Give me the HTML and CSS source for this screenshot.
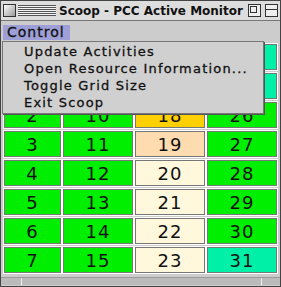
FILE: index.html
```html
<!DOCTYPE html>
<html lang="en">
<head>
  <meta charset="UTF-8" />
  <title>Scoop - PCC Active Monitor</title>
  <link rel="stylesheet" href="styles.css">
</head>
<body>
  <div class="window">
    <div class="titlebar">
      <span class="close-box"></span>
      <span class="stripes left"></span>
      <span class="title">Scoop - PCC Active Monitor</span>
      <span class="stripes right"></span>
      <span class="zoom-box"><span></span></span>
      <span class="collapse-box"></span>
    </div>

    <div class="menubar">
      <span class="menu-title open">Control</span>
    </div>

    <div class="grid-area">
      <div class="grid">
        <div class="cell green hidden">0</div><div class="cell green hidden">8</div><div class="cell green hidden">16</div><div class="cell mint hidden">24</div>
        <div class="cell green hidden">1</div><div class="cell green hidden">9</div><div class="cell green hidden">17</div><div class="cell mint hidden">25</div>
        <div class="cell green">2</div><div class="cell green">10</div><div class="cell orange">18</div><div class="cell green">26</div>
        <div class="cell green">3</div><div class="cell green">11</div><div class="cell peach">19</div><div class="cell green">27</div>
        <div class="cell green">4</div><div class="cell green">12</div><div class="cell cream">20</div><div class="cell green">28</div>
        <div class="cell green">5</div><div class="cell green">13</div><div class="cell cream">21</div><div class="cell green">29</div>
        <div class="cell green">6</div><div class="cell green">14</div><div class="cell cream">22</div><div class="cell green">30</div>
        <div class="cell green">7</div><div class="cell green">15</div><div class="cell cream">23</div><div class="cell mint">31</div>
      </div>
    </div>

    <div class="statusbar">
      <span class="seg first"></span>
      <span class="seg middle"></span>
      <span class="seg last"></span>
    </div>

    <ul class="dropdown">
      <li>Update Activities</li>
      <li>Open Resource Information...</li>
      <li>Toggle Grid Size</li>
      <li>Exit Scoop</li>
    </ul>
  </div>
</body>
</html>
```

FILE: styles.css
```css
body {
  margin: 0;
  width: 281px;
  height: 287px;
  overflow: hidden;
  font-family: "DejaVu Sans", "Liberation Sans", sans-serif;
  background: #cccccc;
}

.window {
  position: relative;
  box-sizing: border-box;
  width: 281px;
  height: 287px;
  border: 1px solid #444;
  background: #cccccc;
  display: flex;
  flex-direction: column;
}

.titlebar {
  height: 19px;
  display: flex;
  align-items: center;
  gap: 2px;
  padding: 0 2px;
  background: #dddddd;
  border-bottom: 1px solid #777;
}

.close-box {
  width: 11px;
  height: 11px;
  border: 1px solid #333;
  background: linear-gradient(135deg, #fff, #999);
}

.stripes {
  height: 11px;
  background: repeating-linear-gradient(to bottom, #555 0, #555 1px, #f4f4f4 1px, #f4f4f4 2px);
}

.stripes.left {
  width: 38px;
}

.stripes.right {
  flex: 1;
}

.title {
  font-size: 12px;
  font-weight: bold;
  color: #111;
  padding: 0 1px;
  white-space: nowrap;
}

.zoom-box {
  position: relative;
  width: 11px;
  height: 11px;
  border: 1px solid #333;
  background: #eee;
}

.zoom-box span {
  position: absolute;
  left: 1px;
  top: 1px;
  width: 5px;
  height: 5px;
  border: 1px solid #333;
}

.collapse-box {
  width: 11px;
  height: 11px;
  border: 1px solid #333;
  background: linear-gradient(to bottom, #eee 0, #eee 4px, #333 4px, #333 5px, #eee 5px);
  margin-left: 2px;
}

.menubar {
  height: 19px;
  display: flex;
  align-items: flex-end;
  padding-left: 2px;
}

.menu-title {
  font-size: 14px;
  letter-spacing: 1px;
  color: #111;
  padding: 0 5px 0 4px;
  line-height: 15px;
  -webkit-text-stroke: 0.3px #111;
}

.menu-title.open {
  background: #9f9fd8;
}

.grid-area {
  flex: 1;
  padding: 4px 0 0 3px;
}

.grid {
  display: grid;
  grid-template-columns: 57px 70px 70px 70px;
  grid-auto-rows: 26px;
  gap: 3px 2px;
}

.cell {
  border: 1px solid #777;
  box-shadow: 0 0 0 1px #fff;
  font-size: 18px;
  color: #111;
  display: flex;
  align-items: center;
  justify-content: center;
  letter-spacing: 1px;
}

.cell.hidden {
  color: transparent;
}

.green { background: #00ee00; }
.mint { background: #00f0a8; }
.orange { background: #ffd000; }
.peach { background: #ffdcb0; }
.cream { background: #fff8dc; }

.statusbar {
  height: 7px;
  margin: 0 0 1px 0;
  display: flex;
  border-top: 1px solid #999;
  background: #bbb;
}

.seg {
  border-right: 1px solid #eee;
}

.seg.first { width: 20px; }
.seg.middle { flex: 1; }
.seg.last { width: 18px; border-right: none; }

.dropdown {
  position: absolute;
  left: 1px;
  top: 40px;
  width: 260px;
  margin: 0;
  padding: 1px 0 2px 0;
  list-style: none;
  background: #d0d0d0;
  border: 1px solid #777;
  box-shadow: 1px 1px 0 #555;
}

.dropdown li {
  font-size: 13px;
  letter-spacing: 1.2px;
  color: #111;
  line-height: 17px;
  padding-left: 21px;
  white-space: nowrap;
  -webkit-text-stroke: 0.3px #111;
}
```
